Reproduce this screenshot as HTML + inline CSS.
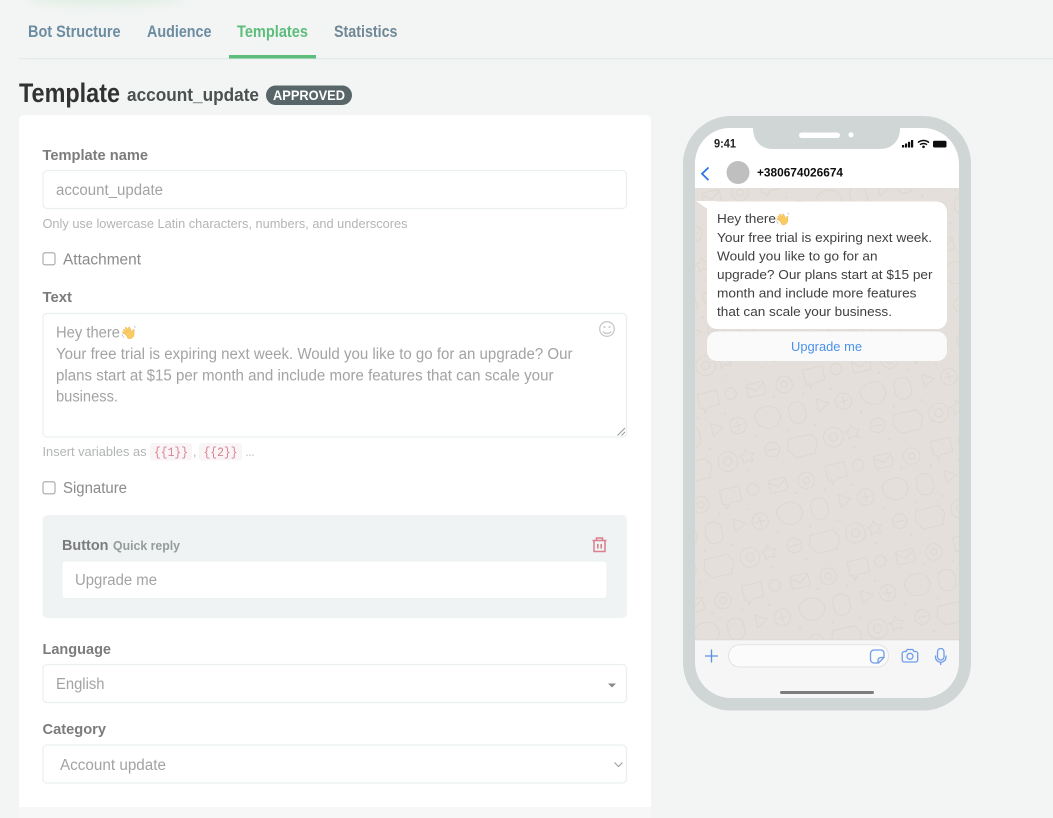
<!DOCTYPE html>
<html lang="en"><head><meta charset="utf-8"><title>Template account_update</title>
<style>
html,body{margin:0;padding:0;width:1053px;height:818px;overflow:hidden;background:#f3f5f4}
svg{display:block}
text{font-family:"Liberation Sans",sans-serif;white-space:pre}
.b{font-weight:700}
.lab{font-weight:700;font-size:15px;fill:#7b7b7b}
.val{font-size:15.5px;fill:#a3a3a3}
.hint{font-size:13px;fill:#b3b5b5}
.msg{font-size:13px;fill:#3f3f3f}
.box{fill:#fff;stroke:#ebf0ef;stroke-width:1.3}
</style></head><body>
<svg width="1053" height="818" viewBox="0 0 1053 818" xmlns="http://www.w3.org/2000/svg">
<defs>
<filter id="bl" x="-20%" y="-200%" width="140%" height="500%"><feGaussianBlur stdDeviation="6"/></filter>
<filter id="s" x="-5%" y="-5%" width="110%" height="110%"><feGaussianBlur stdDeviation=".3"/></filter>
<pattern id="wa" width="132" height="120" patternUnits="userSpaceOnUse" patternTransform="translate(695 188) rotate(-13) scale(.82)">
<g fill="none" stroke="#dcd6d0" stroke-width="1.100">
<rect x="6" y="8" width="22" height="16" rx="2"/><path d="M6 10l11 8 11-8"/>
<circle cx="52" cy="18" r="10"/><circle cx="52" cy="18" r="4"/>
<path d="M78 6h24v18H88l-6 6v-6h-4z"/>
<circle cx="118" cy="14" r="7"/>
<path d="M10 44c10-8 24-6 28 4s-6 20-16 18-18-14-12-22z"/>
<rect x="50" y="42" width="20" height="26" rx="9"/>
<path d="M86 44l14 8-14 8z"/><circle cx="118" cy="54" r="10"/><path d="M112 54h12M118 48v12"/>
<circle cx="20" cy="92" r="9"/><path d="M14 92h12"/>
<path d="M42 84h28l6 10-6 14H46l-8-12z"/>
<circle cx="96" cy="94" r="12"/><circle cx="96" cy="94" r="5"/>
<path d="M120 84l3 6 6 1-4 4 1 6-6-3-6 3 1-6-4-4 6-1z"/>
</g>
<g fill="#dcd6d0"><circle cx="36" cy="30" r="1.300"/><circle cx="72" cy="34" r="1.300"/><circle cx="106" cy="36" r="1.300"/><circle cx="4" cy="72" r="1.300"/><circle cx="44" cy="74" r="1.300"/><circle cx="78" cy="74" r="1.300"/><circle cx="30" cy="112" r="1.300"/><circle cx="118" cy="112" r="1.300"/></g>
</pattern>
<symbol id="wave" viewBox="0 0 14 14">
<g transform="rotate(-28 7 7)">
<path d="M3.400 7.600 1.600 4.700c-.5-.9.700-1.600 1.200-.8L4.400 6.400 3.400 3c-.3-1 1.100-1.400 1.400-.4l1 3.200-.1-3.900c0-1 1.400-1 1.500 0l.4 3.800.9-2.700c.3-1 1.700-.6 1.400.4L9.500 8c.3 0 1-1.100 1.900-1.500.9-.4 1.500.6.900 1.100-1 .9-1.300 2.900-2.900 4.300-2 1.700-4.900 1-6-.6z" fill="#f9cb63" stroke="#eeb44a" stroke-width=".4"/>
</g>
<path d="M.6 8.500c.2 1.200.8 2.400 1.700 3.200M11.500 .8c.7.400 1.200 1 1.500 1.700" fill="none" stroke="#a9bdd9" stroke-width=".7"/>
</symbol>
</defs>

<rect width="1053" height="818" fill="#f3f5f4"/>
<ellipse cx="105" cy="-3" rx="80" ry="7" fill="#dcecdf" filter="url(#bl)"/>

<g filter="url(#s)">
<!-- tabs -->
<rect x="19" y="58" width="1034" height="1.300" fill="#e3e9e7"/>
<rect x="229" y="55" width="87" height="3.500" fill="#5dbd7b"/>
<text x="28" y="37" textLength="92.500" lengthAdjust="spacingAndGlyphs" class="b" fill="#6c8ca2" font-size="16.500">Bot Structure</text>
<text x="147" y="37" textLength="64.500" lengthAdjust="spacingAndGlyphs" class="b" fill="#6c8ca2" font-size="16.500">Audience</text>
<text x="237" y="37" textLength="71" lengthAdjust="spacingAndGlyphs" class="b" fill="#5dbd7b" font-size="16.500">Templates</text>
<text x="334" y="37" textLength="63.500" lengthAdjust="spacingAndGlyphs" class="b" fill="#6f8795" font-size="16.500">Statistics</text>

<!-- title -->
<text x="19" y="102" textLength="101" lengthAdjust="spacingAndGlyphs" class="b" font-size="26.500" fill="#333">Template</text>
<text x="127" y="101" textLength="132" lengthAdjust="spacingAndGlyphs" class="b" font-size="18.500" fill="#4c5151">account_update</text>
<rect x="266" y="85.500" width="86" height="19.500" rx="9.700" fill="#596669"/>
<text x="273" y="100" textLength="72" lengthAdjust="spacingAndGlyphs" class="b" font-size="14" fill="#fff">APPROVED</text>

<!-- card -->
<rect x="19" y="115" width="632" height="710" rx="5" fill="#f6f7f6"/>
<path d="M19 807V120a5 5 0 0 1 5-5h622a5 5 0 0 1 5 5v687z" fill="#fff"/>

<text x="42.500" y="160" textLength="105.500" lengthAdjust="spacingAndGlyphs" class="lab">Template name</text>
<rect x="43" y="170.500" width="583.500" height="38" rx="4" class="box"/>
<text x="56" y="195" textLength="107" lengthAdjust="spacingAndGlyphs" class="val">account_update</text>
<text x="42.500" y="228" textLength="365" lengthAdjust="spacingAndGlyphs" class="hint">Only use lowercase Latin characters, numbers, and underscores</text>

<rect x="43" y="252.800" width="12" height="12" rx="2" fill="#fff" stroke="#a5a5a5" stroke-width="1.100"/>
<text x="63" y="264.500" textLength="78" lengthAdjust="spacingAndGlyphs" font-size="15.500" fill="#8b8b8b">Attachment</text>

<text x="42.500" y="302" textLength="29.500" lengthAdjust="spacingAndGlyphs" class="lab">Text</text>
<rect x="43" y="313.500" width="583.500" height="123.500" rx="4" class="box"/>
<text x="56" y="337.500" textLength="64" lengthAdjust="spacingAndGlyphs" class="val">Hey there</text>
<use href="#wave" x="121.500" y="325" width="15" height="15"/>
<text x="56" y="359" textLength="516.500" lengthAdjust="spacingAndGlyphs" class="val">Your free trial is expiring next week. Would you like to go for an upgrade? Our</text>
<text x="56" y="380.500" textLength="497.500" lengthAdjust="spacingAndGlyphs" class="val">plans start at $15 per month and include more features that can scale your</text>
<text x="56" y="401.500" textLength="62" lengthAdjust="spacingAndGlyphs" class="val">business.</text>
<!-- smiley -->
<g fill="none" stroke="#c8c8c8" stroke-width="1.300">
<circle cx="607" cy="329" r="7.300"/>
<path d="M603 331.500c1.800 2.600 6.200 2.600 8 0" stroke-width="1.400"/>
</g>
<circle cx="604.500" cy="327" r="1" fill="#c8c8c8"/><circle cx="609.500" cy="327" r="1" fill="#c8c8c8"/>
<!-- resize grip -->
<path d="M617.500 435.500l7.500-7.500M621.500 435.500l3.500-3.500" stroke="#8f9a9a" stroke-width=".9" fill="none"/>

<text x="42.500" y="456" textLength="104" lengthAdjust="spacingAndGlyphs" font-size="12.500" fill="#b3b5b5">Insert variables as</text>
<rect x="150" y="443" width="42" height="17.500" rx="3" fill="#f9f5f6"/>
<text x="154" y="456" textLength="34" lengthAdjust="spacingAndGlyphs" style="font-family:'Liberation Mono',monospace" font-size="12.500" fill="#d97f90">{{1}}</text>
<text x="193" y="456" font-size="12.500" fill="#b3b5b5">,</text>
<rect x="199" y="443" width="43" height="17.500" rx="3" fill="#f9f5f6"/>
<text x="203.500" y="456" textLength="34" lengthAdjust="spacingAndGlyphs" style="font-family:'Liberation Mono',monospace" font-size="12.500" fill="#d97f90">{{2}}</text>
<text x="245.500" y="456" textLength="9" lengthAdjust="spacingAndGlyphs" font-size="12.500" fill="#b3b5b5">...</text>

<rect x="43" y="481.800" width="12" height="12" rx="2" fill="#fff" stroke="#a5a5a5" stroke-width="1.100"/>
<text x="63" y="493" textLength="64" lengthAdjust="spacingAndGlyphs" font-size="15.500" fill="#8b8b8b">Signature</text>

<!-- button panel -->
<rect x="42.500" y="515" width="584.500" height="103" rx="5" fill="#f0f3f4"/>
<text x="62" y="550" textLength="46.500" lengthAdjust="spacingAndGlyphs" class="lab">Button</text>
<text x="113" y="550" textLength="67" lengthAdjust="spacingAndGlyphs" class="b" font-size="13" fill="#959a9b">Quick reply</text>
<g fill="none" stroke="#d9808e" stroke-width="1.500">
<path d="M592.500 540.500h14M596.500 540.500v-2.500h6v2.500"/>
<path d="M594 541v10.500h11V541"/>
<path d="M597.800 544v4.500M601.200 544v4.500" stroke-width="1.600"/>
</g>
<rect x="62" y="561" width="545" height="37.500" rx="3" fill="#fff" stroke="#eef1f1" stroke-width="1"/>
<text x="75" y="585" textLength="82" lengthAdjust="spacingAndGlyphs" class="val">Upgrade me</text>

<!-- language -->
<text x="42.500" y="654" textLength="68.500" lengthAdjust="spacingAndGlyphs" class="lab">Language</text>
<rect x="43" y="664.500" width="583.500" height="38" rx="4" class="box"/>
<text x="56" y="689" textLength="48.500" lengthAdjust="spacingAndGlyphs" class="val">English</text>
<path d="M608 683.500h8l-4 4z" fill="#888"/>

<!-- category -->
<text x="42.500" y="734" textLength="63.500" lengthAdjust="spacingAndGlyphs" class="lab">Category</text>
<rect x="43" y="745" width="583.500" height="38" rx="4" class="box"/>
<text x="60" y="770" textLength="106" lengthAdjust="spacingAndGlyphs" class="val">Account update</text>
<path d="M614.500 762.500l4 4 4-4" fill="none" stroke="#a3a3a3" stroke-width="1.200"/>

<!-- phone -->
<rect x="683" y="116" width="288" height="594.500" rx="48" fill="#cfd6d5"/>
<path d="M695 164c0-20 15-36 35-36h23c0 13 8 21 20 21h107c12 0 20-8 20-21h23c20 0 36 16 36 36v24H695z" fill="#fff"/>
<rect x="799" y="132.500" width="41" height="5.500" rx="2.700" fill="#fff"/>
<circle cx="851" cy="134.800" r="2.600" fill="#fff"/>
<text x="714" y="147.500" textLength="22" lengthAdjust="spacingAndGlyphs" class="b" font-size="11.500" fill="#222">9:41</text>
<!-- status -->
<g fill="#111">
<rect x="902" y="145" width="2.200" height="2.500"/><rect x="905" y="143.500" width="2.200" height="4"/><rect x="908" y="141.800" width="2.200" height="5.700"/><rect x="911" y="140" width="2.200" height="7.500"/>
<rect x="933" y="140.800" width="13.500" height="6.700" rx="1.500"/>
</g>
<g fill="none" stroke="#111" stroke-width="1.500"><path d="M918 142.600c3-2.800 8-2.800 11 0M920 144.700c1.900-1.600 5.100-1.600 7 0"/></g>
<circle cx="923.500" cy="146.800" r="1.300" fill="#111"/>
<!-- header -->
<path d="M708.500 167.500l-6.500 6.300 6.500 6.300" fill="none" stroke="#2f78e4" stroke-width="1.800"/>
<circle cx="738" cy="172.500" r="11.500" fill="#bfbfbf"/>
<text x="757" y="176.500" textLength="86" lengthAdjust="spacingAndGlyphs" class="b" font-size="11.500" fill="#111">+380674026674</text>

<!-- chat -->
<rect x="695" y="188" width="264" height="452" fill="#e4dfda"/>
<rect x="695" y="188" width="264" height="452" fill="url(#wa)"/>
<path d="M696 201h20v14z" fill="#fff"/>
<rect x="707" y="201.500" width="240" height="127.500" rx="10" fill="#fff"/>
<text x="717" y="223" textLength="59" lengthAdjust="spacingAndGlyphs" class="msg">Hey there</text>
<use href="#wave" x="776" y="212" width="14" height="14"/>
<text x="717" y="242" textLength="215" lengthAdjust="spacingAndGlyphs" class="msg">Your free trial is expiring next week.</text>
<text x="717" y="260.500" textLength="160.500" lengthAdjust="spacingAndGlyphs" class="msg">Would you like to go for an</text>
<text x="717" y="279" textLength="215.500" lengthAdjust="spacingAndGlyphs" class="msg">upgrade? Our plans start at $15 per</text>
<text x="717" y="297.500" textLength="199.500" lengthAdjust="spacingAndGlyphs" class="msg">month and include more features</text>
<text x="717" y="316" textLength="175" lengthAdjust="spacingAndGlyphs" class="msg">that can scale your business.</text>
<rect x="707" y="331.500" width="240" height="29.500" rx="10" fill="#fafafa"/>
<text x="791" y="351" textLength="71" lengthAdjust="spacingAndGlyphs" font-size="13" fill="#4c92ea">Upgrade me</text>

<!-- footer -->
<path d="M695 639.500h264V662c0 20-16 36-36 36H731c-20 0-36-16-36-36z" fill="#f6f6f6"/>
<rect x="695" y="639.500" width="264" height=".8" fill="#d9d9d9"/>
<path d="M711.500 649.500v13M705 656h13" stroke="#5b90e6" stroke-width="1.300" fill="none"/>
<rect x="728.500" y="644.800" width="160" height="22.200" rx="11" fill="#fbfbfb" stroke="#e3e3e3" stroke-width="1"/>
<g fill="none" stroke="#6d9cea" stroke-width="1.300">
<path d="M874 650h7a3 3 0 0 1 3 3v4.500l-5.500 5.500H874a3.500 3.500 0 0 1-3.500-3.500v-6A3.500 3.500 0 0 1 874 650z"/>
<path d="M884 657.500h-3a3 3 0 0 0-3 3v2.500"/>
<path d="M906 651.500l1.200-2h5.600l1.200 2h1.700a2 2 0 0 1 2 2v6.500a2 2 0 0 1-2 2h-11.500a2 2 0 0 1-2-2v-6.500a2 2 0 0 1 2-2z"/>
<circle cx="910" cy="656.300" r="3"/>
<rect x="937.500" y="648.500" width="6.500" height="11.500" rx="3.200"/>
<path d="M935.500 655.500v1.500a5.200 5.200 0 0 0 10.500 0v-1.500M940.700 662.500v2.500"/>
</g>
<rect x="780" y="691" width="94" height="3" rx="1.500" fill="#7d7d7d"/>
</g>
</svg>
</body></html>
